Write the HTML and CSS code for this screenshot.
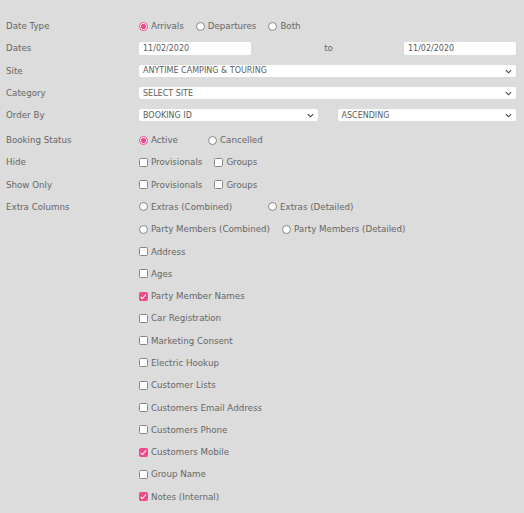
FILE: index.html
```html
<!DOCTYPE html>
<html>
<head>
<meta charset="utf-8">
<link rel="stylesheet" href="styles.css">
</head>
<body>
<form class="report">
  <div class="row">
    <div class="label">Date Type</div>
    <div class="ctrl">
      <label class="opt"><span class="radio checked"></span>Arrivals</label>
      <label class="opt"><span class="radio"></span>Departures</label>
      <label class="opt"><span class="radio"></span>Both</label>
    </div>
  </div>
  <div class="row">
    <div class="label">Dates</div>
    <div class="ctrl dates">
      <div class="field date">11/02/2020</div>
      <span class="to">to</span>
      <div class="field date">11/02/2020</div>
    </div>
  </div>
  <div class="row">
    <div class="label">Site</div>
    <div class="ctrl">
      <div class="field select full">ANYTIME CAMPING &amp; TOURING<svg class="chev" viewBox="0 0 8 5" width="7" height="5"><path d="M1 1l3 3 3-3" fill="none" stroke="#444" stroke-width="1.3"/></svg></div>
    </div>
  </div>
  <div class="row">
    <div class="label">Category</div>
    <div class="ctrl">
      <div class="field select full">SELECT SITE<svg class="chev" viewBox="0 0 8 5" width="7" height="5"><path d="M1 1l3 3 3-3" fill="none" stroke="#444" stroke-width="1.3"/></svg></div>
    </div>
  </div>
  <div class="row row-gap">
    <div class="label">Order By</div>
    <div class="ctrl pair">
      <div class="field select">BOOKING ID<svg class="chev" viewBox="0 0 8 5" width="7" height="5"><path d="M1 1l3 3 3-3" fill="none" stroke="#444" stroke-width="1.3"/></svg></div>
      <div class="field select">ASCENDING<svg class="chev" viewBox="0 0 8 5" width="7" height="5"><path d="M1 1l3 3 3-3" fill="none" stroke="#444" stroke-width="1.3"/></svg></div>
    </div>
  </div>
  <div class="row">
    <div class="label">Booking Status</div>
    <div class="ctrl">
      <label class="opt opt-active"><span class="radio checked"></span>Active</label>
      <label class="opt"><span class="radio"></span>Cancelled</label>
    </div>
  </div>
  <div class="row">
    <div class="label">Hide</div>
    <div class="ctrl">
      <label class="opt"><span class="check"></span>Provisionals</label>
      <label class="opt"><span class="check"></span>Groups</label>
    </div>
  </div>
  <div class="row">
    <div class="label">Show Only</div>
    <div class="ctrl">
      <label class="opt"><span class="check"></span>Provisionals</label>
      <label class="opt"><span class="check"></span>Groups</label>
    </div>
  </div>
  <div class="row">
    <div class="label">Extra Columns</div>
    <div class="ctrl">
      <label class="opt opt-extras"><span class="radio"></span>Extras (Combined)</label>
      <label class="opt"><span class="radio"></span>Extras (Detailed)</label>
    </div>
  </div>
  <div class="row">
    <div class="label"></div>
    <div class="ctrl">
      <label class="opt"><span class="radio"></span>Party Members (Combined)</label>
      <label class="opt"><span class="radio"></span>Party Members (Detailed)</label>
    </div>
  </div>
  <div class="row"><div class="label"></div><div class="ctrl"><label class="opt"><span class="check"></span>Address</label></div></div>
  <div class="row"><div class="label"></div><div class="ctrl"><label class="opt"><span class="check"></span>Ages</label></div></div>
  <div class="row"><div class="label"></div><div class="ctrl"><label class="opt"><span class="check checked"></span>Party Member Names</label></div></div>
  <div class="row"><div class="label"></div><div class="ctrl"><label class="opt"><span class="check"></span>Car Registration</label></div></div>
  <div class="row"><div class="label"></div><div class="ctrl"><label class="opt"><span class="check"></span>Marketing Consent</label></div></div>
  <div class="row"><div class="label"></div><div class="ctrl"><label class="opt"><span class="check"></span>Electric Hookup</label></div></div>
  <div class="row"><div class="label"></div><div class="ctrl"><label class="opt"><span class="check"></span>Customer Lists</label></div></div>
  <div class="row"><div class="label"></div><div class="ctrl"><label class="opt"><span class="check"></span>Customers Email Address</label></div></div>
  <div class="row"><div class="label"></div><div class="ctrl"><label class="opt"><span class="check"></span>Customers Phone</label></div></div>
  <div class="row"><div class="label"></div><div class="ctrl"><label class="opt"><span class="check checked"></span>Customers Mobile</label></div></div>
  <div class="row"><div class="label"></div><div class="ctrl"><label class="opt"><span class="check"></span>Group Name</label></div></div>
  <div class="row"><div class="label"></div><div class="ctrl"><label class="opt"><span class="check checked"></span>Notes (Internal)</label></div></div>
</form>
</body>
</html>
```
FILE: styles.css
```css
html, body {
  margin: 0;
  padding: 0;
  background: #dcdcdc;
}
body {
  font-family: "DejaVu Sans", "Liberation Sans", sans-serif;
  font-size: 8.7px;
  color: #666;
}
.report {
  padding: 15px 8px 0 6px;
}
.row {
  display: grid;
  grid-template-columns: 133px 1fr;
  height: 22.3px;
  align-items: center;
}
.row-gap {
  margin-bottom: 2.4px;
}
.ctrl {
  display: flex;
  align-items: center;
}
.opt {
  display: inline-flex;
  align-items: center;
  margin-right: 12px;
  white-space: nowrap;
}
.opt-active { width: 69px; margin-right: 0; }
.opt-extras { width: 129px; margin-right: 0; }
.radio, .check {
  width: 9px;
  height: 9px;
  box-sizing: border-box;
  background: #fff;
  border: 1px solid #858585;
  margin-right: 3px;
  flex: none;
  position: relative;
}
.radio { border-radius: 50%; }
.radio.checked {
  border-color: #ef4a8c;
  background: radial-gradient(circle, #ef4a8c 0 2.3px, #fff 2.6px);
}
.check { border-radius: 1.5px; }
.check.checked {
  background: #ef4a8c;
  border-color: #ef4a8c;
}
.check.checked::after {
  content: "";
  position: absolute;
  left: 2.2px;
  top: 0.2px;
  width: 2px;
  height: 4.5px;
  border: solid #fff;
  border-width: 0 1.4px 1.4px 0;
  transform: rotate(40deg);
}
.field {
  height: 12px;
  background: #fff;
  border-radius: 2px;
  font-size: 8px;
  color: #5c5c5c;
  display: flex;
  align-items: center;
  padding: 0 4px;
  box-sizing: border-box;
  position: relative;
  white-space: nowrap;
}
.dates {
  justify-content: space-between;
}
.date {
  width: 112px;
  height: 13px;
}
.to {
  padding-left: 2px;
}
.full { width: 100%; }
.pair {
  display: grid;
  grid-template-columns: 1fr 1fr;
  column-gap: 20px;
}
.chev {
  position: absolute;
  right: 4px;
  top: 4px;
}
```
